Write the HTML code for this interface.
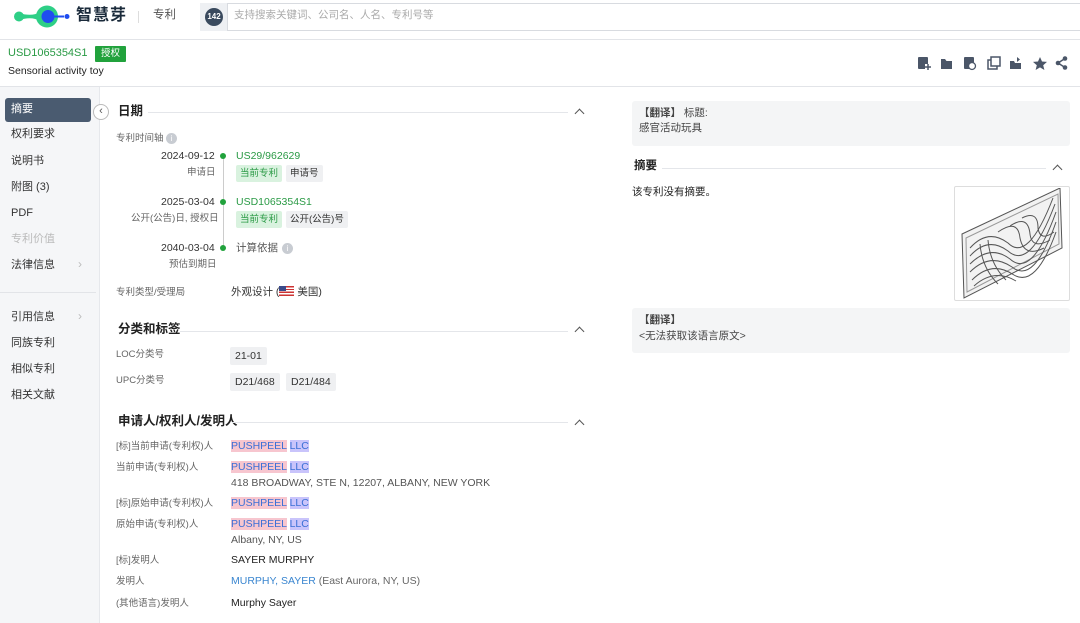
<!DOCTYPE html>
<html><head><meta charset="utf-8"><style>
*{margin:0;padding:0;box-sizing:border-box}
body{width:1080px;height:623px;overflow:hidden;background:#fff;font-family:"Liberation Sans","Noto Sans CJK SC",sans-serif;color:#333;position:relative;font-size:12px;line-height:1.2}
.a{position:absolute;white-space:nowrap}
.lbl{font-size:9.5px;color:#666}
.tag{position:absolute;height:17px;line-height:17px;padding:0 4px;font-size:9.5px;border-radius:2px}
.g{background:#d9f2df;color:#2a9a45}
.gr{background:#eff0f2;color:#333}
.h{font-size:12.5px;font-weight:bold;color:#222}
.line{position:absolute;height:1px;background:#e4e6ea}
.car{position:absolute;width:7px;height:7px;border-left:1.5px solid #555;border-top:1.5px solid #555;transform:rotate(45deg)}
.pk{background:#f7c6cf;color:#3b6fd6}.pu{background:#c9c4fb;color:#3b6fd6}
.side{font-size:11px;color:#333;position:absolute;left:11px}
</style></head><body>
<!-- header -->
<div class="a" style="left:0;top:0;width:1080px;height:40px;border-bottom:1px solid #e2e4e8"></div>
<svg class="a" style="left:10px;top:4px" width="62" height="26">
<path d="M9 9 Q22 13 30 8 L30 17 Q22 12 9 16Z" fill="#2ecf86"/>
<circle cx="9" cy="12.5" r="5" fill="#2ecf86"/>
<circle cx="37" cy="12.5" r="11" fill="#2ecf86"/>
<circle cx="38" cy="12.5" r="6.5" fill="#1f4df0"/>
<rect x="44" y="11.5" width="10" height="2" fill="#1f4df0"/>
<circle cx="57" cy="12.5" r="2.5" fill="#1f4df0"/>
</svg>
<div class="a" style="left:76px;top:6px;font-size:16px;font-weight:bold;color:#1a2a3a;letter-spacing:1px">智慧芽</div>
<div class="a" style="left:138px;top:11px;width:1px;height:12px;background:#ddd"></div>
<div class="a" style="left:153px;top:9px;font-size:11.5px;color:#555">专利</div>
<div class="a" style="left:200px;top:3px;width:880px;height:28px;border:1px solid #d8dbe0;border-right:none;border-radius:3px 0 0 3px"></div>
<div class="a" style="left:200px;top:3px;width:28px;height:28px;background:#eef0f3;border-right:1px solid #d8dbe0"></div>
<div class="a" style="left:205px;top:8px;width:18px;height:18px;border-radius:50%;background:#3a4a5e;color:#fff;font-size:8px;font-weight:bold;text-align:center;line-height:18px">142</div>
<div class="a" style="left:234px;top:9px;font-size:10.5px;color:#aaa">支持搜索关键词、公司名、人名、专利号等</div>
<!-- title -->
<div class="a" style="left:8px;top:47px;font-size:11px;color:#2a9a45">USD1065354S1</div>
<div class="a" style="left:95px;top:46px;height:16px;padding:0 6px;background:#21a23c;color:#fff;font-size:9.5px;line-height:16px;border-radius:1px">授权</div>
<div class="a" style="left:8px;top:65px;font-size:10.5px;color:#222">Sensorial activity toy</div>
<div class="a" style="left:0;top:86px;width:1080px;height:1px;background:#e2e4e8"></div>
<!-- toolbar icons -->
<svg class="a" style="left:916px;top:55px" width="160" height="16" fill="#4b5668">
<rect x="2" y="2" width="10" height="12" rx="1"/><rect x="9" y="9" width="6" height="6" fill="#fff"/><path d="M12 9v6M9 12h6" stroke="#4b5668" stroke-width="1.5"/>
<path d="M25 4h4l1.5 2H36v8H25Z"/>
<rect x="48" y="2" width="10" height="12" rx="1"/><circle cx="56" cy="11" r="3.5" fill="#fff" stroke="#4b5668" stroke-width="1.3"/>
<rect x="72" y="5" width="9" height="9" fill="none" stroke="#4b5668" stroke-width="1.5"/><rect x="75" y="2" width="9" height="9" fill="#fff" stroke="#4b5668" stroke-width="1.5"/>
<path d="M94 6h4l1 2h6v6H94Z"/><path d="M101 2l3 2.5-3 2.5z"/>
<path d="M124 2l2 4.5 5 .4-3.8 3.3 1.2 4.8L124 12.4 119.6 15l1.2-4.8L117 6.9l5-.4z"/>
<circle cx="142" cy="8" r="2.3"/><circle cx="149" cy="3.5" r="2.3"/><circle cx="149" cy="12.5" r="2.3"/><path d="M142 8L149 3.5M142 8L149 12.5" stroke="#4b5668" stroke-width="1.5"/>
</svg>
<!-- sidebar -->
<div class="a" style="left:0;top:87px;width:100px;height:536px;background:#f5f6f8;border-right:1px solid #e6e8ec"></div>
<div class="a" style="left:5px;top:98px;width:86px;height:24px;background:#4a5b70;border-radius:3px"></div>
<div class="side" style="top:103px;color:#fff">摘要</div>
<div class="side" style="top:128px">权利要求</div>
<div class="side" style="top:155px">说明书</div>
<div class="side" style="top:181px">附图 (3)</div>
<div class="side" style="top:207px">PDF</div>
<div class="side" style="top:233px;color:#bbb">专利价值</div>
<div class="side" style="top:259px">法律信息</div>
<div class="a" style="left:78px;top:257px;color:#bbb;font-size:12px">›</div>
<div class="a" style="left:0;top:292px;width:96px;height:1px;background:#e2e4e8"></div>
<div class="side" style="top:311px">引用信息</div>
<div class="a" style="left:78px;top:309px;color:#bbb;font-size:12px">›</div>
<div class="side" style="top:337px">同族专利</div>
<div class="side" style="top:363px">相似专利</div>
<div class="side" style="top:389px">相关文献</div>
<div class="a" style="left:93px;top:104px;width:16px;height:16px;border-radius:50%;border:1px solid #bbb;background:#fff;font-size:11px;line-height:13px;text-align:center;color:#555">‹</div>
<!-- 日期 -->
<div class="a h" style="left:118px;top:104px">日期</div>
<div class="line" style="left:148px;top:112px;width:420px"></div>
<div class="car" style="left:576px;top:110px"></div>
<div class="a lbl" style="left:116px;top:133px">专利时间轴</div>
<div class="a" style="left:166px;top:133px;width:11px;height:11px;border-radius:50%;background:#c8ccd2;color:#fff;font-size:8px;text-align:center;line-height:11px">i</div>
<div class="a" style="left:223px;top:156px;width:1px;height:92px;background:#ccc"></div>
<div class="a" style="left:161px;top:150px;font-size:10.5px">2024-09-12</div>
<div class="a" style="left:220px;top:153px;width:6px;height:6px;border-radius:50%;background:#21a23c"></div>
<div class="a" style="left:236px;top:150px;font-size:10.5px;color:#2a9a45">US29/962629</div>
<div class="a lbl" style="left:187px;top:167px">申请日</div>
<div class="tag g" style="left:236px;top:165px">当前专利</div>
<div class="tag gr" style="left:286px;top:165px">申请号</div>
<div class="a" style="left:161px;top:196px;font-size:10.5px">2025-03-04</div>
<div class="a" style="left:220px;top:199px;width:6px;height:6px;border-radius:50%;background:#21a23c"></div>
<div class="a" style="left:236px;top:196px;font-size:10.5px;color:#2a9a45">USD1065354S1</div>
<div class="a lbl" style="left:131px;top:213px">公开(公告)日, 授权日</div>
<div class="tag g" style="left:236px;top:211px">当前专利</div>
<div class="tag gr" style="left:286px;top:211px">公开(公告)号</div>
<div class="a" style="left:161px;top:242px;font-size:10.5px">2040-03-04</div>
<div class="a" style="left:220px;top:245px;width:6px;height:6px;border-radius:50%;background:#21a23c"></div>
<div class="a" style="left:236px;top:242px;font-size:10.5px;color:#555">计算依据</div>
<div class="a" style="left:282px;top:243px;width:11px;height:11px;border-radius:50%;background:#c8ccd2;color:#fff;font-size:8px;text-align:center;line-height:11px">i</div>
<div class="a lbl" style="left:169px;top:259px">预估到期日</div>
<div class="a lbl" style="left:116px;top:287px">专利类型/受理局</div>
<div class="a" style="left:231px;top:286px;font-size:10.5px">外观设计 (<span style="display:inline-block;width:15px;height:10px;vertical-align:-1px;background:repeating-linear-gradient(#c33 0 1.4px,#fff 1.4px 2.8px);position:relative"><span style="position:absolute;left:0;top:0;width:7px;height:5px;background:#3a4a8a"></span></span> 美国)</div>
<!-- 分类 -->
<div class="a h" style="left:118px;top:322px">分类和标签</div>
<div class="line" style="left:180px;top:331px;width:388px"></div>
<div class="car" style="left:576px;top:328px"></div>
<div class="a lbl" style="left:116px;top:349px">LOC分类号</div>
<div class="tag gr" style="left:230px;top:347px;height:18px;line-height:18px;font-size:10.5px;padding:0 5px">21-01</div>
<div class="a lbl" style="left:116px;top:375px">UPC分类号</div>
<div class="tag gr" style="left:230px;top:373px;height:18px;line-height:18px;font-size:10.5px;padding:0 5px">D21/468</div>
<div class="tag gr" style="left:286px;top:373px;height:18px;line-height:18px;font-size:10.5px;padding:0 5px">D21/484</div>
<!-- 申请人 -->
<div class="a h" style="left:118px;top:414px">申请人/权利人/发明人</div>
<div class="line" style="left:232px;top:422px;width:336px"></div>
<div class="car" style="left:576px;top:421px"></div>
<div class="a lbl" style="left:116px;top:441px">[标]当前申请(专利权)人</div>
<div class="a" style="left:231px;top:440px;font-size:10.5px"><span class="pk">PUSHPEEL</span> <span class="pu">LLC</span></div>
<div class="a lbl" style="left:116px;top:462px">当前申请(专利权)人</div>
<div class="a" style="left:231px;top:461px;font-size:10.5px"><span class="pk">PUSHPEEL</span> <span class="pu">LLC</span></div>
<div class="a" style="left:231px;top:477px;font-size:10.5px;color:#555">418 BROADWAY, STE N, 12207, ALBANY, NEW YORK</div>
<div class="a lbl" style="left:116px;top:498px">[标]原始申请(专利权)人</div>
<div class="a" style="left:231px;top:497px;font-size:10.5px"><span class="pk">PUSHPEEL</span> <span class="pu">LLC</span></div>
<div class="a lbl" style="left:116px;top:519px">原始申请(专利权)人</div>
<div class="a" style="left:231px;top:518px;font-size:10.5px"><span class="pk">PUSHPEEL</span> <span class="pu">LLC</span></div>
<div class="a" style="left:231px;top:534px;font-size:10.5px;color:#555">Albany, NY, US</div>
<div class="a lbl" style="left:116px;top:555px">[标]发明人</div>
<div class="a" style="left:231px;top:554px;font-size:10.5px;color:#222">SAYER MURPHY</div>
<div class="a lbl" style="left:116px;top:576px">发明人</div>
<div class="a" style="left:231px;top:575px;font-size:10.5px;color:#3a86d0">MURPHY, SAYER <span style="color:#666">(East Aurora, NY, US)</span></div>
<div class="a lbl" style="left:116px;top:598px">(其他语言)发明人</div>
<div class="a" style="left:231px;top:597px;font-size:10.5px;color:#222">Murphy Sayer</div>
<!-- right -->
<div class="a" style="left:632px;top:101px;width:438px;height:45px;background:#f4f5f6;border-radius:3px"></div>
<div class="a" style="left:639px;top:107px;font-size:10.5px;color:#444"><b>【翻译】</b> 标题:</div>
<div class="a" style="left:639px;top:122px;font-size:10.5px;color:#444">感官活动玩具</div>
<div class="a h" style="left:634px;top:160px;font-size:11.5px">摘要</div>
<div class="line" style="left:662px;top:168px;width:384px"></div>
<div class="car" style="left:1054px;top:166px"></div>
<div class="a" style="left:632px;top:186px;font-size:10.5px;color:#222">该专利没有摘要。</div>
<div class="a" style="left:954px;top:186px;width:116px;height:115px;border:1px solid #ddd;border-radius:2px;background:#fff"></div>
<svg class="a" style="left:958px;top:188px" width="108" height="112" fill="none" stroke="#555" stroke-width="1">
<path d="M4 46 L102 0 L104 60 L6 110 Z" fill="#f2f2f2"/>
<path d="M8 50 L100 6 L101 56 L9 104 Z" stroke="#999"/>
<path d="M12 60 Q30 40 50 55 Q70 75 95 10"/>
<path d="M12 68 Q30 48 50 63 Q72 83 97 16"/>
<path d="M12 76 Q32 56 52 71 Q74 91 98 24"/>
<path d="M12 84 Q32 64 54 79 Q76 97 98 34"/>
<path d="M14 92 Q34 72 56 87 Q78 100 98 44"/>
<path d="M16 98 Q36 80 58 93"/>
<path d="M40 44 Q60 30 62 50 Q66 70 86 60"/>
<path d="M52 38 Q70 26 72 46 Q74 62 92 52"/>
<path d="M64 30 Q80 22 80 40 Q82 54 96 44"/>
<path d="M22 56 Q24 80 40 96"/><path d="M30 52 Q32 76 48 92"/>
</svg>
<div class="a" style="left:632px;top:308px;width:438px;height:45px;background:#f4f5f6;border-radius:3px"></div>
<div class="a" style="left:639px;top:314px;font-size:10.5px;color:#444"><b>【翻译】</b></div>
<div class="a" style="left:639px;top:330px;font-size:10.5px;color:#444">&lt;无法获取该语言原文&gt;</div>
</body></html>
